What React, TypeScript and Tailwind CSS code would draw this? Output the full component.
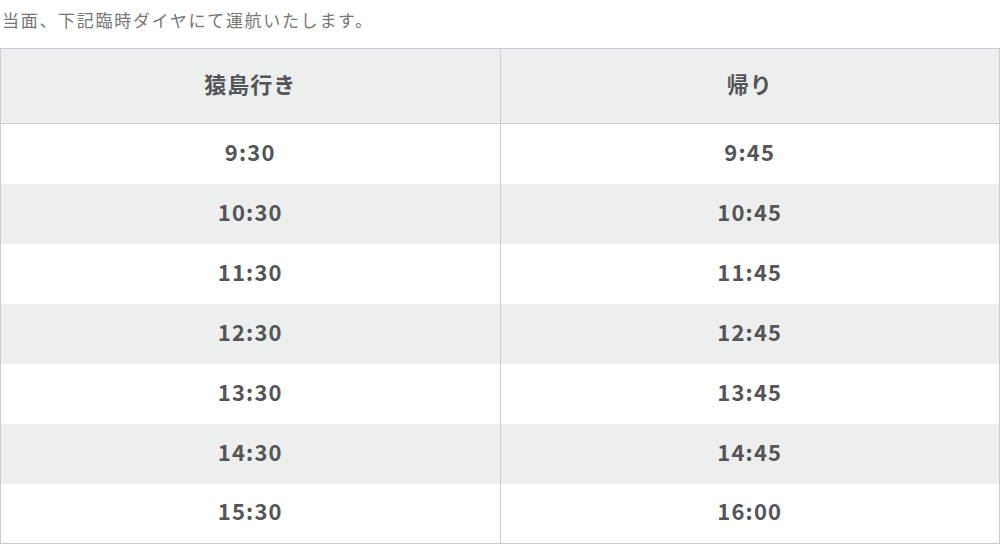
import React from "react";

const rows = [
  ["9:30", "9:45"],
  ["10:30", "10:45"],
  ["11:30", "11:45"],
  ["12:30", "12:45"],
  ["13:30", "13:45"],
  ["14:30", "14:45"],
  ["15:30", "16:00"],
];

const App = () => {
  return (
    <div className="w-[1000px] bg-white font-['Noto_Sans_CJK_JP','Noto_Sans',sans-serif]">
      <p className="h-[48px] pt-[6px] pl-[2px] text-[17px] leading-[28px] tracking-[1.7px] text-[#777]">
        当面、下記臨時ダイヤにて運航いたします。
      </p>
      <table className="w-full border-collapse border border-[#c9cdd8] text-[#535559] font-bold">
        <thead>
          <tr className="bg-[#ecefee] h-[75px]">
            <th className="w-1/2 border-b border-r border-[#c9cdd8] pb-[5px] text-[22px] tracking-[1px] font-bold">
              猿島行き
            </th>
            <th className="w-1/2 border-b border-[#c9cdd8] pb-[5px] text-[22px] tracking-[1px] font-bold">
              帰り
            </th>
          </tr>
        </thead>
        <tbody>
          {rows.map(([go, back], i) => (
            <tr key={go} className={i % 2 === 1 ? "h-[60px] bg-[#ecefee]" : "h-[60px] bg-white"}>
              <td className="border-r border-[#c9cdd8] pb-[6px] text-center text-[22px] leading-[30px] tracking-[1.2px]">
                {go}
              </td>
              <td className="pb-[6px] text-center text-[22px] leading-[30px] tracking-[1.2px]">{back}</td>
            </tr>
          ))}
        </tbody>
      </table>
    </div>
  );
};

export default App;
